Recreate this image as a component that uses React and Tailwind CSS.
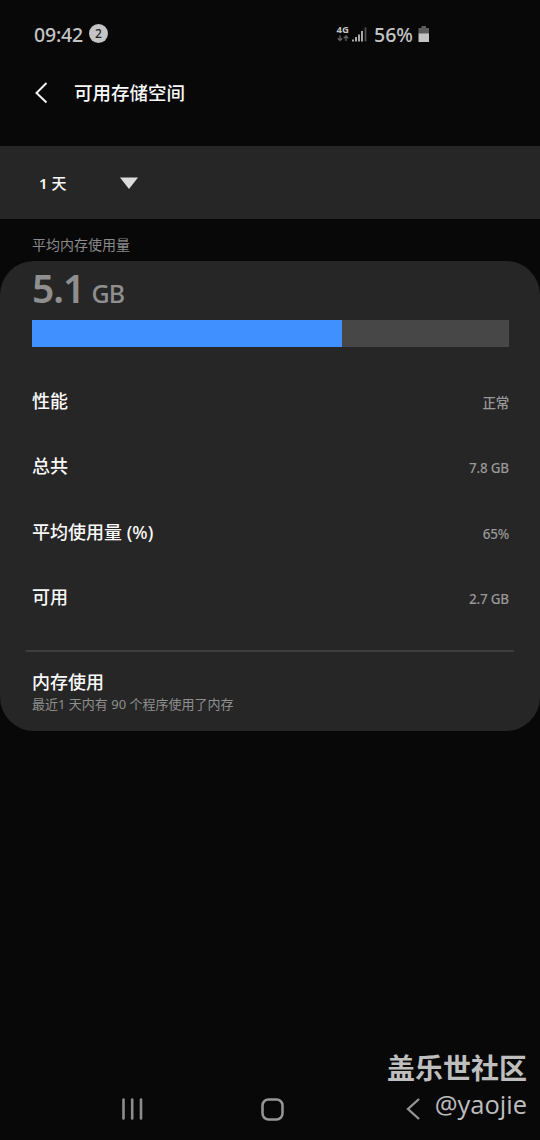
import React from "react";

const rows = [
  { label: "性能", value: "正常" },
  { label: "总共", value: "7.8 GB" },
  { label: "平均使用量 (%)", value: "65%" },
  { label: "可用", value: "2.7 GB" },
];

function StatusBar() {
  return (
    <div className="flex h-[69px] items-center pl-[34px] text-[19.500px] font-medium text-[#c4c4c4]">
      <span className="w-[55px] tracking-[-0.2px] whitespace-nowrap">09:42</span>
      <span className="mb-0.5 flex h-[19px] w-[19px] items-center justify-center rounded-full bg-[#c4c4c4] text-xs leading-[19px] font-medium text-[#222]">
        2
      </span>
      <div className="mb-0.5 ml-[228px] flex w-[38px] flex-none items-center">
        <svg width="32" height="20" viewBox="0 0 32 20" fill="none">
          <text x="0.5" y="9" fontSize="9.500" fontWeight="700" fill="#c4c4c4">4G</text>
          <path d="M4 11.500v5M1.800 14.300L4 16.600l2.200-2.300M10 17v-5M7.800 14.200L10 12l2.200 2.200" stroke="#666" strokeWidth="1.300" />
          <path d="M17 17.500v-2M20 17.500v-4.500M23 17.500v-7M26 17.500V7" stroke="#c4c4c4" strokeWidth="1.700" />
          <path d="M29.500 17.500V3.500" stroke="#555" strokeWidth="1.700" />
        </svg>
      </div>
      <span className="w-[44px] whitespace-nowrap">56%</span>
      <svg className="mb-0.5" width="12" height="16" viewBox="0 0 12 16">
        <path d="M3.500 0h4.500v2H11v6H.5V2h3z" fill="#5c5c5c" />
        <path d="M.5 7.500H11V16H.5z" fill="#c4c4c4" />
      </svg>
    </div>
  );
}

function Header() {
  return (
    <div className="flex h-[77px] items-start pt-2.5 pl-[34px]">
      <svg className="mt-[3px]" width="14" height="22" viewBox="0 0 14 22" fill="none">
        <path d="M12.500 1L2.500 11l10 9.500" stroke="#f2f2f2" strokeWidth="2" />
      </svg>
      <h1 className="ml-[26px] text-[18.500px] leading-[28px] font-medium text-[#fafafa]">可用存储空间</h1>
    </div>
  );
}

function NavBar() {
  return (
    <div className="flex h-[62px] items-center pl-[121px]">
      <svg width="22" height="22" viewBox="0 0 22 22" fill="none">
        <path d="M2.500 1.500v19M11.200 1.500v19M20 1.500v19" stroke="#8c8c8c" strokeWidth="2.600" strokeLinecap="round" />
      </svg>
      <svg className="ml-[118px]" width="23" height="23" viewBox="0 0 23 23" fill="none">
        <rect x="1.500" y="1.500" width="20" height="20" rx="6" stroke="#969696" strokeWidth="2.500" />
      </svg>
      <svg className="ml-[122px]" width="15" height="22" viewBox="0 0 15 22" fill="none">
        <path d="M13 1L2 11l11 10" stroke="#969696" strokeWidth="2.300" />
      </svg>
    </div>
  );
}

export default function App() {
  return (
    <div className="relative flex h-[1140px] w-[540px] flex-col overflow-hidden bg-[#080808] font-['Noto_Sans','Noto_Sans_CJK_SC',sans-serif]">
      <StatusBar />
      <Header />

      <div className="flex h-[73px] items-center bg-[#262626] pl-[39px]">
        <span className="w-[81px] pt-0.5 text-[15px] font-medium text-[#fafafa]">
          <span className="font-semibold">1</span> 天
        </span>
        <svg width="18" height="12" viewBox="0 0 18 12">
          <path d="M0 .5h18L9 12z" fill="#dcdcdc" />
        </svg>
      </div>

      <div className="flex h-[42px] items-center pt-[9px] pl-8 text-sm text-[#8a8a8a]">平均内存使用量</div>

      <div className="flex h-[470px] flex-col rounded-[34px] bg-[#262626]">
        <div className="flex h-[59px] items-baseline gap-[7px] pl-8 text-[#8f8f8f]">
          <span className="text-[39px] leading-[54px] font-semibold tracking-[-1px]">5.1</span>
          <span className="text-[25px] leading-[54px] font-medium tracking-[-0.8px]">GB</span>
        </div>
        <div className="mr-[31.500px] ml-[31.500px] h-[27px] bg-[#474747]">
          <div className="h-full w-[65.100%] bg-[#4090ff]" />
        </div>

        <div className="flex flex-col pt-[21px]">
          {rows.map((row) => (
            <div key={row.label} className="flex h-[65.500px] items-center justify-between pr-[31px] pl-8">
              <span className="text-lg font-medium text-[#fafafa]">{row.label}</span>
              <span className="pt-1 text-[13.500px] font-medium tracking-[-0.2px] text-[#999]">{row.value}</span>
            </div>
          ))}
        </div>

        <div className="mx-[26px] mt-5 h-[2px] bg-[#3e3e3e]" />
        <div className="flex flex-col pt-[17px] pl-8">
          <span className="text-lg leading-[26px] font-medium text-[#fafafa]">内存使用</span>
          <span className="text-[13px] leading-[18px] text-[#8f8f8f]">最近1 天内有 90 个程序使用了内存</span>
        </div>
      </div>

      <div className="flex-1" />
      <NavBar />

      <div className="absolute right-[13px] bottom-[19px] flex flex-col items-end text-[#bebebe]">
        <span className="text-[28px] leading-[38px] font-bold">盖乐世社区</span>
        <span className="font-['Open_Sans',sans-serif] text-[25.500px] leading-[34px]">@yaojie</span>
      </div>
    </div>
  );
}
